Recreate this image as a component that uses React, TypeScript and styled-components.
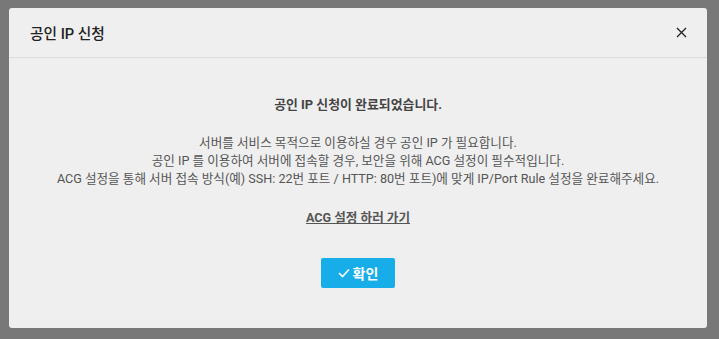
import { createGlobalStyle, styled } from 'styled-components';

const GlobalStyle = createGlobalStyle`
    html, body {
        margin: 0;
        padding: 0;
        background: #787878;
        font-family: Roboto, "Noto Sans CJK KR", sans-serif;
    }
`;

const Backdrop = styled.div`
    width: 719px;
    height: 339px;
    padding: 8px 12px 11px 9px;
    box-sizing: border-box;
`;

const Modal = styled.div`
    height: 100%;
    background: #efefef;
    border-radius: 3px;
    display: flex;
    flex-direction: column;
`;

const Header = styled.div`
    height: 49px;
    border-bottom: 1px solid #dcdcdc;
    display: flex;
    align-items: center;
    justify-content: space-between;
    padding: 0 20px 0 21px;
`;

const Title = styled.h4`
    margin: 0;
    font-size: 14.7px;
    font-weight: 500;
    color: #222;
`;

const CloseButton = styled.button`
    border: none;
    background: none;
    padding: 0;
    width: 12px;
    height: 12px;
    display: flex;
    align-items: center;
    justify-content: center;
    cursor: pointer;
`;

const Body = styled.div`
    display: flex;
    flex-direction: column;
    align-items: center;
    padding-top: 38px;
    text-align: center;
    font-size: 12.6px;
    line-height: 18px;
    color: #555;
`;

const Heading = styled.p`
    margin: 0 0 20px;
    font-size: 12.9px;
    font-weight: 700;
    color: #444;
`;

const Paragraph = styled.p`
    margin: 0 0 21px;
    white-space: nowrap;
`;

const ActionLink = styled.a`
    font-weight: 700;
    color: #555;
    text-decoration: underline;
    cursor: pointer;
`;

const ConfirmButton = styled.button`
    margin-top: 31px;
    width: 74px;
    height: 30px;
    border: none;
    border-radius: 2px;
    background: #16ade8;
    color: #fff;
    font-family: inherit;
    font-size: 14px;
    font-weight: 700;
    display: flex;
    align-items: center;
    justify-content: center;
    gap: 3px;
    cursor: pointer;
`;

export default function App() {
    return (
        <>
            <GlobalStyle />
            <Backdrop>
                <Modal>
                    <Header>
                        <Title>공인 IP 신청</Title>
                        <CloseButton aria-label="닫기">
                            <svg width="11" height="11" viewBox="0 0 11 11">
                                <path
                                    d="M1 1L10 10M10 1L1 10"
                                    stroke="#222"
                                    strokeWidth="1.3"
                                />
                            </svg>
                        </CloseButton>
                    </Header>
                    <Body>
                        <Heading>공인 IP 신청이 완료되었습니다.</Heading>
                        <Paragraph>
                            서버를 서비스 목적으로 이용하실 경우 공인 IP 가 필요합니다.
                            <br />
                            공인 IP 를 이용하여 서버에 접속할 경우, 보안을 위해 ACG 설정이 필수적입니다.
                            <br />
                            ACG 설정을 통해 서버 접속 방식(예) SSH: 22번 포트 / HTTP: 80번 포트)에 맞게 IP/Port Rule 설정을 완료해주세요.
                        </Paragraph>
                        <ActionLink>ACG 설정 하러 가기</ActionLink>
                        <ConfirmButton>
                            <svg width="12" height="10" viewBox="0 0 12 10">
                                <path
                                    d="M1 5L4.5 8.5L11 1.5"
                                    stroke="#fff"
                                    strokeWidth="1.6"
                                    fill="none"
                                />
                            </svg>
                            확인
                        </ConfirmButton>
                    </Body>
                </Modal>
            </Backdrop>
        </>
    );
}
